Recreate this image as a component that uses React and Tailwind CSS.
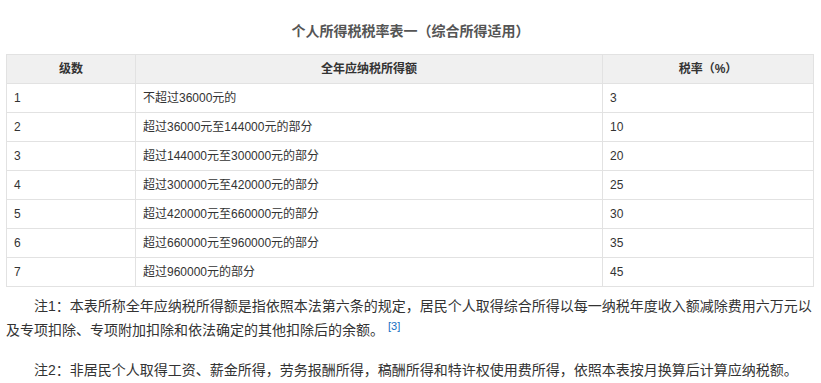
import React from 'react';

const rows = [
    ['1', '不超过36000元的', '3'],
    ['2', '超过36000元至144000元的部分', '10'],
    ['3', '超过144000元至300000元的部分', '20'],
    ['4', '超过300000元至420000元的部分', '25'],
    ['5', '超过420000元至660000元的部分', '30'],
    ['6', '超过660000元至960000元的部分', '35'],
    ['7', '超过960000元的部分', '45'],
];

const cell = 'border border-[#e2e2e2] px-[7px] py-[6px] leading-[16px] text-left';
const head = 'border border-[#e2e2e2] px-[7px] py-[6px] leading-[16px] text-center font-bold';

const App = () => {
    return (
        <div className="w-[821px] h-[383px] bg-white text-[#333] font-['Liberation_Sans','Noto_Sans_CJK_SC',sans-serif] overflow-hidden">
            <div className="ml-[6px] w-[807px] pt-[21px]">
                <h2 className="text-center text-[14px] leading-[20px] font-bold text-[#555] pl-[2px] mb-[13px]">
                    个人所得税税率表一（综合所得适用）
                </h2>
                <table className="w-full border-collapse text-[12px] table-fixed">
                    <colgroup>
                        <col className="w-[129px]" />
                        <col className="w-[467px]" />
                        <col className="w-[211px]" />
                    </colgroup>
                    <thead>
                        <tr className="bg-[#f0f0f0]">
                            <th className={head}>级数</th>
                            <th className={head}>全年应纳税所得额</th>
                            <th className={head}>税率（%）</th>
                        </tr>
                    </thead>
                    <tbody>
                        {rows.map((r) => (
                            <tr key={r[0]}>
                                <td className={cell}>{r[0]}</td>
                                <td className={cell}>{r[1]}</td>
                                <td className={cell}>{r[2]}</td>
                            </tr>
                        ))}
                    </tbody>
                </table>
                <p className="mt-[7px] w-[810px] text-[14px] leading-[24px] indent-[28px]">
                    注1：本表所称全年应纳税所得额是指依照本法第六条的规定，居民个人取得综合所得以每一纳税年度收入额减除费用六万元以及专项扣除、专项附加扣除和依法确定的其他扣除后的余额。
                    <sup className="ml-[4px] text-[11px] text-[#136ec2]">[3]</sup>
                </p>
                <p className="mt-[16px] text-[14px] leading-[24px] indent-[28px]">
                    注2：非居民个人取得工资、薪金所得，劳务报酬所得，稿酬所得和特许权使用费所得，依照本表按月换算后计算应纳税额。
                </p>
            </div>
        </div>
    );
};

export default App;
